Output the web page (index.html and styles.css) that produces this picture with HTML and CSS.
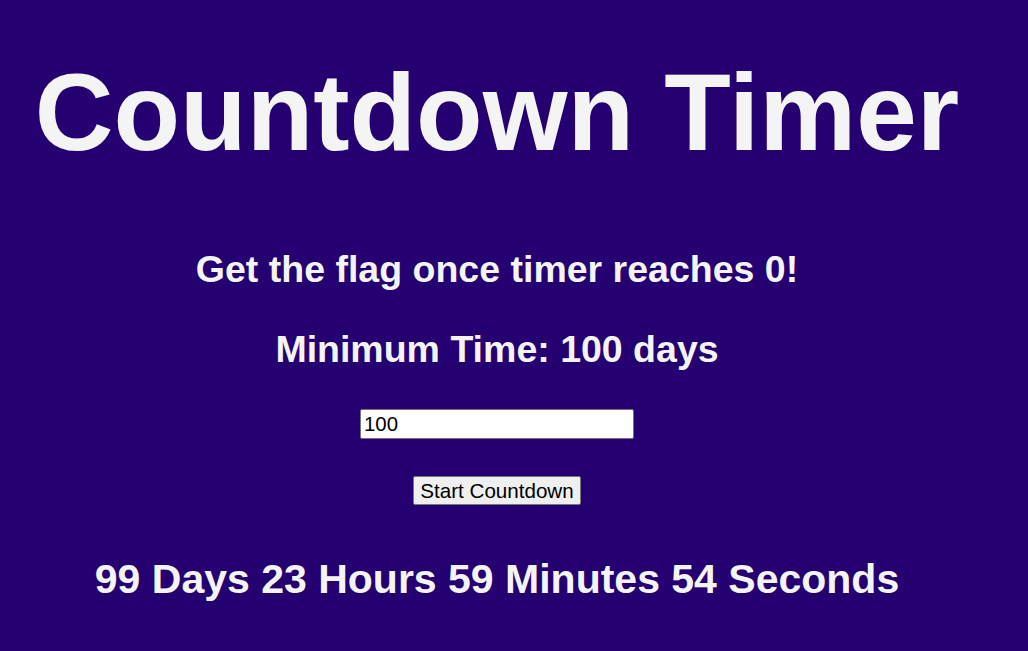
FILE: index.html
```html
<!DOCTYPE html>
<html lang="en">
<head>
<meta charset="utf-8">
<title>Countdown Timer</title>
<link rel="stylesheet" href="styles.css">
</head>
<body>
<main class="page">
  <h1 class="title">Countdown Timer</h1>
  <h2 class="subtitle first">Get the flag once timer reaches 0!</h2>
  <h2 class="subtitle second">Minimum Time: 100 days</h2>
  <input class="days-input" type="text" value="100">
  <button class="start-btn" type="button">Start Countdown</button>
  <div class="countdown">99 Days 23 Hours 59 Minutes 54 Seconds</div>
</main>
</body>
</html>
```

FILE: styles.css
```css
html, body {
  margin: 0;
  padding: 0;
  background: #250070;
}

body {
  font-family: "Liberation Sans", Arial, sans-serif;
  color: #f4f4f4;
  height: 651px;
  overflow: hidden;
}

.page {
  width: 994px;
  display: flex;
  flex-direction: column;
  align-items: center;
  text-align: center;
  padding-top: 50px;
}

.title {
  margin: 0;
  font-size: 109px;
  font-weight: bold;
  line-height: 125px;
  white-space: nowrap;
}

.subtitle {
  margin: 0;
  font-size: 37.5px;
  font-weight: bold;
  line-height: 43px;
  white-space: nowrap;
}

.first {
  margin-top: 73px;
}

.second {
  margin-top: 37px;
}

.days-input {
  box-sizing: border-box;
  margin-top: 38px;
  width: 274px;
  height: 30px;
  padding: 1px 3px;
  font-family: "Liberation Sans", Arial, sans-serif;
  font-size: 20.4px;
  color: #000;
  background: #fff;
  border: 1px solid #767676;
  border-radius: 2px;
}

.start-btn {
  box-sizing: border-box;
  margin-top: 37px;
  width: 168px;
  height: 29px;
  padding: 0 4px;
  font-family: "Liberation Sans", Arial, sans-serif;
  font-size: 20.6px;
  color: #000;
  background: #efefef;
  border: 1px solid #767676;
  border-radius: 2px;
  white-space: nowrap;
}

.countdown {
  margin-top: 51px;
  font-size: 41px;
  font-weight: bold;
  line-height: 47px;
  white-space: nowrap;
}
```
